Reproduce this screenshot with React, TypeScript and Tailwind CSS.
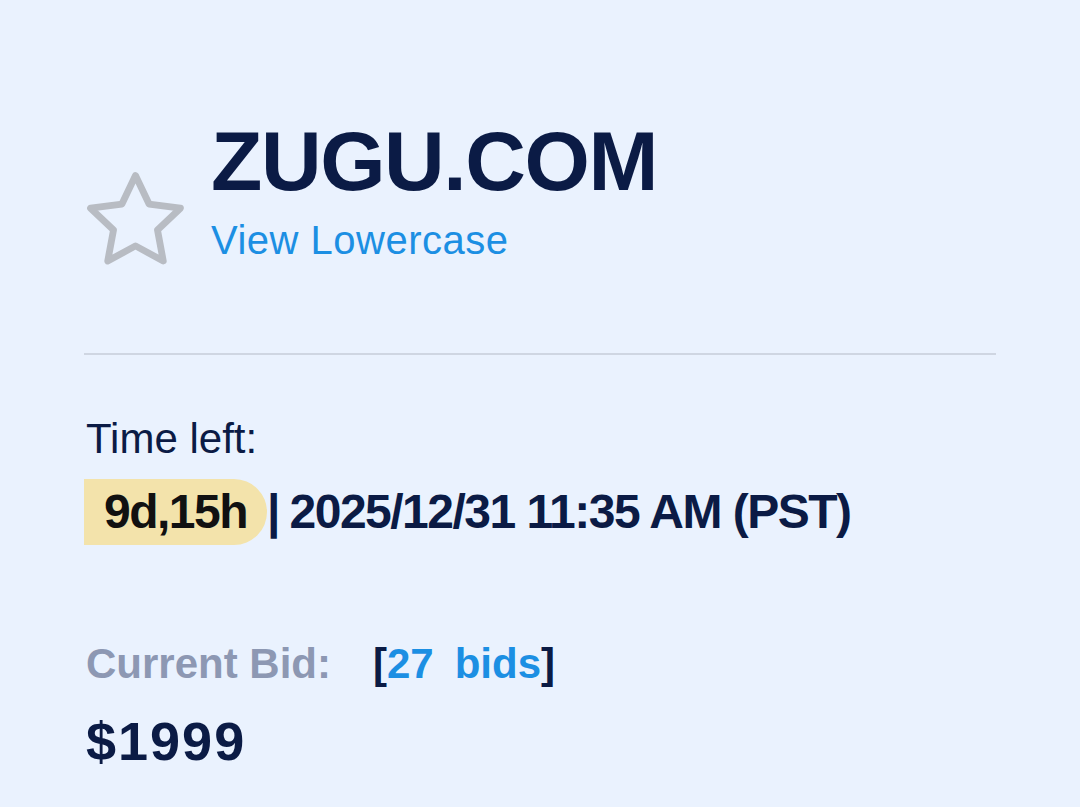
import React from 'react'

function StarIcon() {
  // 5-point outline star, rounded joins
  const cx = 50
  const cy = 53
  const R = 45
  const r = 22
  const pts: string[] = []
  for (let i = 0; i < 10; i++) {
    const a = ((-90 + i * 36) * Math.PI) / 180
    const rad = i % 2 === 0 ? R : r
    pts.push(`${(cx + rad * Math.cos(a)).toFixed(2)},${(cy + rad * Math.sin(a)).toFixed(2)}`)
  }
  return (
    <svg width="105" height="100" viewBox="0 0 100 95" fill="none">
      <polygon points={pts.join(' ')} stroke="#b8bcc3" strokeWidth="6.5" strokeLinejoin="round" />
    </svg>
  )
}

export default function App() {
  return (
    <div className="min-h-screen bg-[#eaf2fe] px-[84px] pt-[119px] font-['Liberation_Sans',Arial,sans-serif] text-[#0b1b45]">
      {/* HEADER */}
      <div className="flex items-start">
        <div className="mt-[48px] ml-[-1px] shrink-0">
          <StarIcon />
        </div>
        <div className="ml-[23px] flex flex-col">
          <h1 className="text-[84px] font-bold leading-none tracking-[-1.4px]">ZUGU.COM</h1>
          <a className="mt-[17px] text-[40px] leading-none tracking-[0.5px] text-[#1c8fe3]">View Lowercase</a>
        </div>
      </div>

      <div className="mt-[86px] h-[2px] bg-[#cfd6e2]" />

      {/* TIME LEFT */}
      <p className="mt-[63px] ml-[2px] text-[42px] leading-none">Time left:</p>
      <div className="mt-[19px] flex items-center">
        <span className="flex h-[66px] items-center rounded-r-full bg-[#f3e3ab] pl-[20px] pr-[20px] text-[48px] font-bold leading-none tracking-[-1.5px] text-[#111]">
          9d,15h
        </span>
        <span className="text-[48px] font-bold leading-none">|</span>
        <span className="ml-[9px] text-[48px] font-bold leading-none tracking-[-1.5px]">
          2025/12/31 11:35 AM (PST)
        </span>
      </div>

      {/* BID */}
      <div className="mt-[98px] ml-[2px] flex items-baseline text-[42px] font-bold leading-none">
        <span className="text-[#8d98b3]">Current Bid:</span>
        <span className="ml-[42px]">[</span>
        <span className="text-[#1c8fe3]">27</span>
        <span className="ml-[21px] text-[#1c8fe3]">bids</span>
        <span>]</span>
      </div>
      <p className="mt-[29px] ml-[2px] text-[54px] font-bold leading-none tracking-[2px]">$1999</p>
    </div>
  )
}
